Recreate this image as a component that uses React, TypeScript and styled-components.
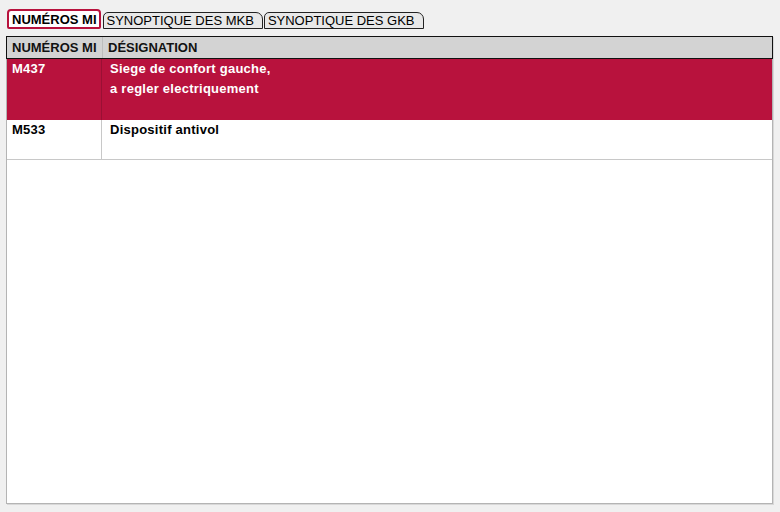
import styled, { createGlobalStyle } from "styled-components";

const GlobalStyle = createGlobalStyle`
    html, body {
        margin: 0;
        padding: 0;
        background: #f0f0f0;
        font-family: "Liberation Sans", Arial, sans-serif;
    }
`;

type Row = { code: string; lines: string[]; selected?: boolean; height: number };

const rows: Row[] = [
    { code: "M437", lines: ["Siege de confort gauche,", "a regler electriquement"], selected: true, height: 61 },
    { code: "M533", lines: ["Dispositif antivol"], height: 40 },
];

const tabs = ["NUMÉROS MI", "SYNOPTIQUE DES MKB", "SYNOPTIQUE DES GKB"];

const App = () => {
    return (
        <StyledPage>
            <GlobalStyle />
            <StyledTabBar>
                {tabs.map((tab, key) => (
                    <StyledTab active={key === 0} key={key}>
                        {tab}
                    </StyledTab>
                ))}
            </StyledTabBar>
            <StyledPanel>
                <StyledHeader>
                    <StyledHeadCell>NUMÉROS MI</StyledHeadCell>
                    <StyledHeadCell>DÉSIGNATION</StyledHeadCell>
                </StyledHeader>
                {rows.map((row, key) => (
                    <StyledRow selected={!!row.selected} key={key} style={{ height: row.height }}>
                        <StyledCell selected={!!row.selected} divider>
                            {row.code}
                        </StyledCell>
                        <StyledCell selected={!!row.selected}>
                            {row.lines.map((line, i) => (
                                <div key={i}>{line}</div>
                            ))}
                        </StyledCell>
                    </StyledRow>
                ))}
            </StyledPanel>
        </StyledPage>
    );
};
export default App;

const StyledPage = styled.div({
    width: 780,
    height: 512,
    boxSizing: "border-box",
    padding: "9px 7px 8px 6px",
    display: "flex",
    flexDirection: "column",
});

const StyledTabBar = styled.div({
    display: "flex",
    alignItems: "flex-end",
    paddingLeft: 1,
    height: 20,
    marginBottom: 7,
});

const StyledTab = styled.div<{ active: boolean }>(({ active }) => ({
    boxSizing: "border-box",
    height: active ? 20 : 17,
    padding: active ? "0 2px 0 3px" : "0 8px 0 3px",
    marginRight: active ? 2 : 1,
    display: "flex",
    alignItems: "center",
    fontSize: 13,
    fontWeight: active ? "bold" : "normal",
    color: "#000",
    background: active ? "#fff" : "#e8e8e8",
    border: active ? "2px solid #b8123d" : "1px solid #222",
    borderRadius: active ? "4px 4px 2px 2px" : "5px 7px 0 0",
    whiteSpace: "nowrap",
}));

const StyledPanel = styled.div({
    flex: 1,
    boxSizing: "border-box",
    background: "#fff",
    border: "1px solid #b4b4b4",
    borderTop: "none",
    boxShadow: "1px 1px 0 #d8d8d8",
    display: "flex",
    flexDirection: "column",
});

const StyledHeader = styled.div({
    display: "grid",
    gridTemplateColumns: "96px 1fr",
    height: 23,
    boxSizing: "border-box",
    background: "#d3d3d3",
    border: "1px solid #111",
    margin: "0 -1px",
});

const StyledHeadCell = styled.div({
    display: "flex",
    alignItems: "center",
    padding: "0 5px",
    fontSize: 13,
    fontWeight: "bold",
    whiteSpace: "nowrap",
    overflow: "hidden",
    color: "#111",
    "&:first-child": {
        borderRight: "1px solid #bdbdbd",
    },
});

const StyledRow = styled.div<{ selected: boolean }>(({ selected }) => ({
    display: "grid",
    gridTemplateColumns: "95px 1fr",
    boxSizing: "border-box",
    background: selected ? "#b8123d" : "#fff",
    borderBottom: selected ? "none" : "1px solid #c8c8c8",
}));

const StyledCell = styled.div<{ selected: boolean; divider?: boolean }>(({ selected, divider }) => ({
    padding: divider ? "0 5px" : "0 8px",
    fontSize: 13,
    letterSpacing: 0.25,
    fontWeight: "bold",
    lineHeight: "20px",
    whiteSpace: "nowrap",
    color: selected ? "#fff" : "#000",
    borderRight: divider ? `1px solid ${selected ? "#9a1034" : "#c8c8c8"}` : "none",
}));
